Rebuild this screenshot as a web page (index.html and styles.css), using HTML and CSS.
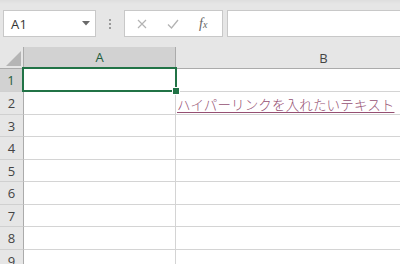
FILE: index.html
```html
<!DOCTYPE html>
<html lang="ja">
<head>
<meta charset="utf-8">
<link rel="stylesheet" href="styles.css">
</head>
<body>
<div class="app">
  <div class="toolbar">
    <div class="namebox">
      <span class="name">A1</span>
      <svg class="caret" width="8" height="5" viewBox="0 0 8 5"><path d="M0 0H8L4 4.5Z" fill="#6a6a6a"/></svg>
    </div>
    <div class="dots"><i></i><i></i><i></i></div>
    <div class="fxbox">
      <svg class="ico" width="10" height="10" viewBox="0 0 10 10"><path d="M1 1L9 9M9 1L1 9" stroke="#b3b3b3" stroke-width="1.2" fill="none"/></svg>
      <svg class="ico" width="12" height="10" viewBox="0 0 12 10"><path d="M1 5.5L4.5 9L11 1" stroke="#b3b3b3" stroke-width="1.3" fill="none"/></svg>
      <span class="fx">f<sub>x</sub></span>
    </div>
    <div class="formula"></div>
  </div>
  <div class="grid">
    <div class="corner"><svg width="15" height="15" viewBox="0 0 15 15"><path d="M15 0V15H0Z" fill="#b5b5b5"/></svg></div>
    <div class="colhead sel">A</div>
    <div class="colhead">B</div>

    <div class="rowhead sel r23">1</div>
    <div class="cell r23 active"><div class="selbox"><span class="handle"></span></div></div>
    <div class="cell r23"></div>

    <div class="rowhead r23">2</div>
    <div class="cell r23"></div>
    <div class="cell r23 link"><span>ハイパーリンクを入れたいテキスト</span></div>

    <div class="rowhead r22">3</div>
    <div class="cell r22"></div>
    <div class="cell r22"></div>

    <div class="rowhead r23">4</div>
    <div class="cell r23"></div>
    <div class="cell r23"></div>

    <div class="rowhead r22">5</div>
    <div class="cell r22"></div>
    <div class="cell r22"></div>

    <div class="rowhead r23">6</div>
    <div class="cell r23"></div>
    <div class="cell r23"></div>

    <div class="rowhead r22">7</div>
    <div class="cell r22"></div>
    <div class="cell r22"></div>

    <div class="rowhead r23">8</div>
    <div class="cell r23"></div>
    <div class="cell r23"></div>

    <div class="rowhead r22">9</div>
    <div class="cell r22"></div>
    <div class="cell r22"></div>
  </div>
</div>
</body>
</html>
```
FILE: styles.css
```css
html, body {
  margin: 0;
  padding: 0;
}
body {
  width: 400px;
  height: 264px;
  overflow: hidden;
  background: #ffffff;
  font-family: "Open Sans", "Noto Sans", "Noto Sans CJK JP", sans-serif;
  color: #444444;
}
.app {
  display: flex;
  flex-direction: column;
  width: 400px;
  overflow: hidden;
}
.toolbar {
  height: 47px;
  box-sizing: border-box;
  background: linear-gradient(#dedede 0, #e6e6e6 4px);
  display: flex;
  align-items: flex-start;
  padding-top: 10px;
}
.namebox {
  margin-left: 3px;
  width: 93px;
  height: 27px;
  box-sizing: border-box;
  background: #ffffff;
  border: 1px solid #c8c8c8;
  display: flex;
  align-items: center;
  justify-content: space-between;
  padding: 0 5px 0 7px;
}
.name {
  font-size: 13px;
  color: #333333;
  letter-spacing: 0.3px;
}
.caret {
  display: block;
}
.dots {
  width: 28px;
  height: 27px;
  display: flex;
  flex-direction: column;
  align-items: center;
  justify-content: center;
  gap: 2px;
}
.dots i {
  display: block;
  width: 2px;
  height: 2px;
  background: #9a9a9a;
}
.fxbox {
  width: 99px;
  height: 27px;
  box-sizing: border-box;
  background: #ffffff;
  border: 1px solid #c8c8c8;
  display: flex;
  align-items: center;
  padding-left: 12px;
  gap: 20px;
}
.ico {
  display: block;
}
.fx {
  font-family: "Liberation Serif", "DejaVu Serif", serif;
  font-style: italic;
  font-size: 14px;
  color: #666666;
  margin-left: 0;
}
.fx sub {
  font-size: 10px;
  vertical-align: 0;
  position: relative;
  top: 0;
}
.formula {
  margin-left: 4px;
  flex: 1;
  height: 27px;
  box-sizing: border-box;
  background: #ffffff;
  border: 1px solid #c8c8c8;
  border-right: none;
}
.grid {
  display: grid;
  grid-template-columns: 24px 152px 296px;
  grid-template-rows: 22px;
  width: 472px;
}
.corner {
  background: #e6e6e6;
  border-right: 1px solid #ababab;
  border-bottom: 1px solid #ababab;
  display: flex;
  align-items: flex-end;
  justify-content: flex-end;
  padding: 0 2px 2px 0;
}
.corner svg {
  display: block;
}
.colhead {
  background: #e6e6e6;
  border-right: 1px solid #c6c6c6;
  border-bottom: 1px solid #ababab;
  font-size: 13px;
  display: flex;
  align-items: center;
  justify-content: center;
  color: #444444;
}
.colhead.sel {
  background: #d2d2d2;
  border-bottom: 2px solid #217346;
  color: #1f5e3d;
  border-right-color: #ababab;
}
.rowhead {
  background: #e6e6e6;
  border-right: 1px solid #ababab;
  border-bottom: 1px solid #d0d0d0;
  font-size: 13px;
  display: flex;
  align-items: center;
  justify-content: center;
  color: #444444;
}
.rowhead.sel {
  background: #d2d2d2;
  color: #1f5e3d;
  border-right: 2px solid #217346;
}
.r23 { height: 23px; box-sizing: border-box; }
.r22 { height: 22px; box-sizing: border-box; }
.cell {
  border-right: 1px solid #d4d4d4;
  border-bottom: 1px solid #d4d4d4;
  position: relative;
}
.active {
  position: relative;
}
.selbox {
  position: absolute;
  left: -2px;
  top: -2px;
  right: -2px;
  bottom: -1px;
  border: 2px solid #217346;
  z-index: 2;
}
.handle {
  position: absolute;
  right: -5px;
  bottom: -5px;
  width: 6px;
  height: 6px;
  background: #217346;
  border: 1px solid #ffffff;
}
.link {
  display: flex;
  align-items: flex-end;
  overflow: visible;
  white-space: nowrap;
}
.link span {
  font-family: "Noto Sans CJK JP", "Noto Sans", sans-serif;
  font-weight: 300;
  font-size: 13.5px;
  line-height: 18px;
  color: #954f72;
  text-decoration: underline;
  text-underline-offset: 2px;
  padding-left: 1px;
  padding-bottom: 1px;
  letter-spacing: 0.15px;
}
```
